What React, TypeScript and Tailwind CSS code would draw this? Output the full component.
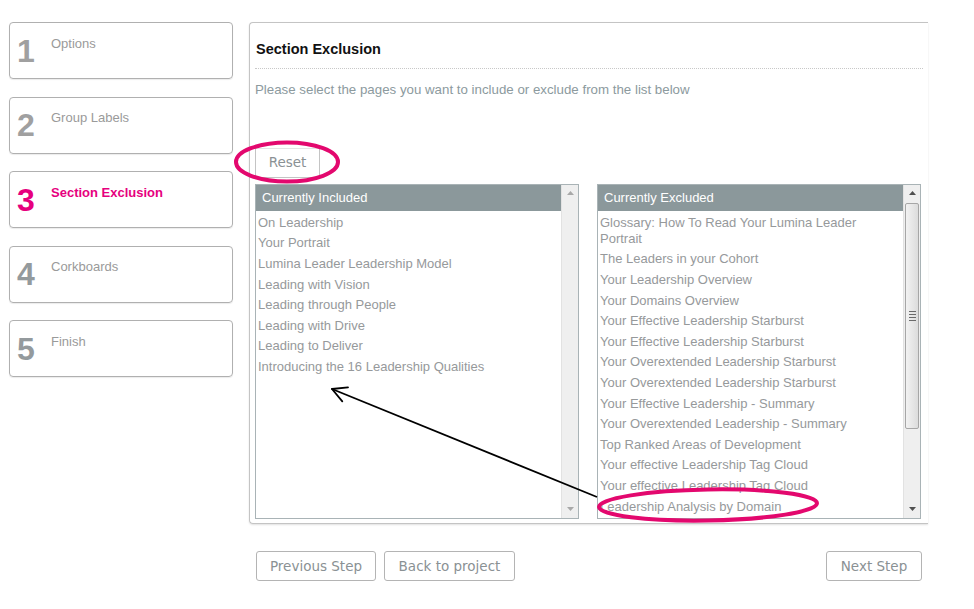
import React from "react";

const steps = [
  { n: "1", label: "Options" },
  { n: "2", label: "Group Labels" },
  { n: "3", label: "Section Exclusion", active: true },
  { n: "4", label: "Corkboards" },
  { n: "5", label: "Finish" },
];

const included = [
  "On Leadership",
  "Your Portrait",
  "Lumina Leader Leadership Model",
  "Leading with Vision",
  "Leading through People",
  "Leading with Drive",
  "Leading to Deliver",
  "Introducing the 16 Leadership Qualities",
];

const excluded = [
  "Glossary: How To Read Your Lumina Leader Portrait",
  "The Leaders in your Cohort",
  "Your Leadership Overview",
  "Your Domains Overview",
  "Your Effective Leadership Starburst",
  "Your Effective Leadership Starburst",
  "Your Overextended Leadership Starburst",
  "Your Overextended Leadership Starburst",
  "Your Effective Leadership - Summary",
  "Your Overextended Leadership - Summary",
  "Top Ranked Areas of Development",
  "Your effective Leadership Tag Cloud",
  "Your effective Leadership Tag Cloud",
  "Leadership Analysis by Domain",
];

function UpArrow({ color }: { color: string }) {
  return (
    <svg width="7" height="4" viewBox="0 0 7 4">
      <path d="M0 4 L3.5 0 L7 4 Z" fill={color} />
    </svg>
  );
}

function DownArrow({ color }: { color: string }) {
  return (
    <svg width="7" height="4" viewBox="0 0 7 4">
      <path d="M0 0 L3.5 4 L7 0 Z" fill={color} />
    </svg>
  );
}

function Scrollbar({ thumb }: { thumb: boolean }) {
  const arrow = thumb ? "#505050" : "#a8a8a8";
  return (
    <div className="w-[17px] h-full bg-[#efefef] border-l border-[#e2e2e2] flex flex-col">
      <div className="h-[17px] flex items-center justify-center">
        <UpArrow color={arrow} />
      </div>
      <div className="flex-1 flex flex-col pt-[1px]">
        {thumb && (
          <div className="h-[226px] mx-[1px] rounded-[2px] border border-[#a6a6a6] bg-[linear-gradient(to_right,#f2f2f2,#dcdcdc)] flex items-center justify-center">
            <div className="flex flex-col gap-[2px]">
              <div className="w-[7px] h-[1px] bg-[#6a6a6a]" />
              <div className="w-[7px] h-[1px] bg-[#6a6a6a]" />
              <div className="w-[7px] h-[1px] bg-[#6a6a6a]" />
              <div className="w-[7px] h-[1px] bg-[#6a6a6a]" />
            </div>
          </div>
        )}
      </div>
      <div className="h-[17px] flex items-center justify-center">
        <DownArrow color={arrow} />
      </div>
    </div>
  );
}

function ListBox({ title, items, thumb }: { title: string; items: string[]; thumb: boolean }) {
  return (
    <div className="w-[324px] h-[335px] border border-[#a9b3b6] bg-white flex">
      <div className="flex-1 flex flex-col overflow-hidden">
        <div className="h-[26px] shrink-0 bg-[#8b989b] text-white text-[13px] flex items-center pl-[6px]">
          {title}
        </div>
        <div className="pt-[2px] pl-[2px] pr-[2px] text-[13px] leading-[16px] text-[#96999b]">
          {items.map((t, i) => (
            <div key={i} className="py-[2.3px]">
              {t}
            </div>
          ))}
        </div>
      </div>
      <Scrollbar thumb={thumb} />
    </div>
  );
}

function Btn({ children, w }: { children: React.ReactNode; w: string }) {
  return (
    <div
      className={`${w} h-[30px] border border-[#b4b4b4] rounded-[3px] bg-white flex items-center justify-center text-[13.5px] text-[#8a9194] font-['DejaVu_Sans',Verdana,sans-serif]`}
    >
      {children}
    </div>
  );
}

export default function App() {
  return (
    <div className="w-[974px] h-[609px] bg-white relative overflow-hidden font-['Liberation_Sans',Arial,sans-serif]">
      <div className="flex pt-[22px] pl-[9px]">
        {/* Sidebar */}
        <div className="w-[224px] flex flex-col gap-[17.5px]">
          {steps.map((s) => (
            <div
              key={s.n}
              className="h-[57px] border border-[#b0b0b0] rounded-[4px] flex items-center pl-[7px] shadow-[0_1px_1px_rgba(0,0,0,0.08)]"
            >
              <div
                className={`w-[34px] text-[32px] font-bold leading-none ${
                  s.active ? "text-[#e6007e]" : s.n === "4" || s.n === "5" ? "text-[#949a9d]" : "text-[#a0a0a0]"
                }`}
              >
                {s.n}
              </div>
              <div
                className={`self-start pt-[12.5px] text-[13px] leading-[15px] ${
                  s.active ? "text-[#e6007e] font-bold" : "text-[#9a9a9a]"
                }`}
              >
                {s.label}
              </div>
            </div>
          ))}
        </div>

        {/* Main */}
        <div className="ml-[16px] w-[679px] flex flex-col">
          <div className="h-[502px] border border-r-0 border-[#c4c4c4] rounded-l-[4px] shadow-[0_1px_2px_rgba(0,0,0,0.12)] px-[5px] pt-[18px] flex flex-col">
            <div className="pb-[11px] border-b border-dotted border-[#c8c8c8] pl-[1px] text-[14.5px] leading-[16px] font-bold text-[#111]">
              Section Exclusion
            </div>
            <div className="mt-[13px] text-[13.3px] leading-[15px] text-[#8c9a9e]">
              Please select the pages you want to include or exclude from the list below
            </div>
            <div className="mt-[50.5px] w-[65px] h-[30px] border border-[#c4c4c4] border-t-[#e4e4e4] bg-white flex items-center justify-center text-[13.5px] text-[#8a9194] font-['DejaVu_Sans',Verdana,sans-serif]">
              Reset
            </div>
            <div className="mt-[6px] flex gap-[18px]">
              <ListBox title="Currently Included" items={included} thumb={false} />
              <ListBox title="Currently Excluded" items={excluded} thumb={true} />
            </div>
          </div>
          <div className="mt-[27px] flex pl-[7px] pr-[6px]">
            <Btn w="w-[120px]">Previous Step</Btn>
            <div className="w-[8px]" />
            <Btn w="w-[131px]">Back to project</Btn>
            <div className="flex-1" />
            <Btn w="w-[96px]">Next Step</Btn>
          </div>
        </div>
      </div>

      {/* Annotation overlay */}
      <svg
        className="absolute left-0 top-0 pointer-events-none"
        width="974"
        height="609"
        viewBox="0 0 974 609"
      >
        <ellipse cx="287" cy="162" rx="51" ry="19.5" fill="none" stroke="#e3086e" strokeWidth="4" />
        <ellipse
          cx="708"
          cy="505"
          rx="109"
          ry="15.5"
          fill="none"
          stroke="#e3086e"
          strokeWidth="4"
          transform="rotate(-1 708 505)"
        />
        <line x1="597" y1="497" x2="332" y2="389" stroke="#000" strokeWidth="1.8" />
        <line x1="332" y1="389" x2="348" y2="387.4" stroke="#000" strokeWidth="1.8" strokeLinecap="round" />
        <line x1="332" y1="389" x2="342.3" y2="401.3" stroke="#000" strokeWidth="1.8" strokeLinecap="round" />
      </svg>
    </div>
  );
}
